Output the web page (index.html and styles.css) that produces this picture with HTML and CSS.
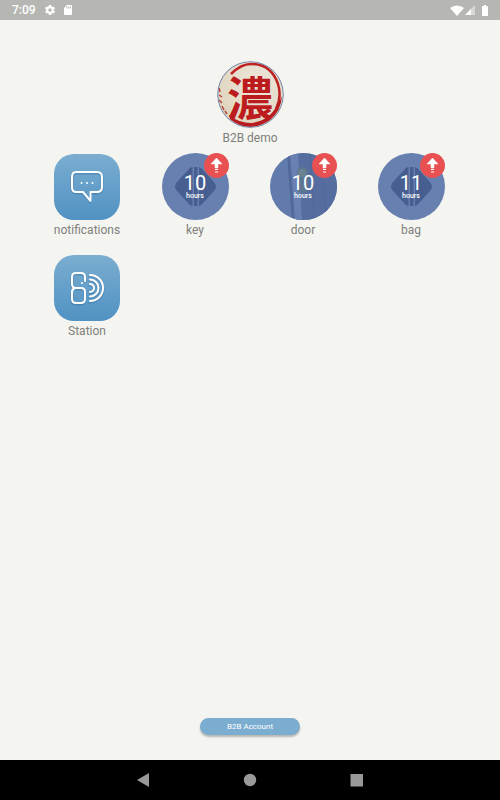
FILE: index.html
```html
<!DOCTYPE html>
<html lang="en">
<head>
    <meta charset="UTF-8">
    <meta name="viewport" content="width=device-width, initial-scale=1.0">
    <title>B2B demo</title>
    <link rel="stylesheet" href="styles.css">
</head>
<body>
    <!-- shared shapes -->
    <svg class="defs" aria-hidden="true">
        <symbol id="arrow" viewBox="0 0 25 25">
            <path d="M12.500 5L18 11H14V15H11V11H7Z" fill="#fff" stroke="#fff" stroke-width="0.500" stroke-linejoin="round"/>
            <path d="M11 16.500h3M11 19h3" stroke="#fff" stroke-width="1.200"/>
        </symbol>
        <symbol id="diamond" viewBox="0 0 67 67">
            <path d="M30.500 14V53Q28 53 26 50L15 38Q11 33.500 15 29L26 17Q28 14 30.500 14Z" fill="#475f90"/>
            <path d="M37 14V53Q39 53 41 50L52 38Q56 33.500 52 29L41 17Q39 14 37 14Z" fill="#475f90"/>
            <path d="M32 14h3.500v39h-3.500z" fill="#475f90"/>
        </symbol>
    </svg>

    <header class="status-bar">
        <span class="clock">7:09</span>
        <svg class="status-icon" viewBox="0 0 24 24">
            <path fill="#fff" d="M19.400 13c.1-.3.1-.7.1-1s0-.7-.1-1l2.100-1.600c.2-.2.3-.4.1-.7l-2-3.400c-.1-.3-.4-.3-.6-.3l-2.500 1c-.5-.4-1.100-.7-1.700-1l-.4-2.600c0-.3-.2-.4-.5-.4h-4c-.2 0-.4.1-.5.4l-.4 2.600c-.6.3-1.100.6-1.700 1l-2.500-1c-.2 0-.5 0-.6.3l-2 3.400c-.1.200-.1.500.1.700L4.600 11c-.1.300-.1.700-.1 1s0 .7.1 1l-2.100 1.600c-.2.200-.2.400-.1.700l2 3.400c.1.300.4.300.6.3l2.500-1c.5.4 1.100.7 1.700 1l.4 2.600c.1.300.2.400.5.4h4c.2 0 .5-.1.5-.4l.4-2.600c.6-.3 1.200-.6 1.700-1l2.500 1c.2 0 .5 0 .6-.3l2-3.400c.1-.2.1-.5-.1-.7zM12 15.500a3.500 3.500 0 1 1 0-7 3.500 3.500 0 0 1 0 7z"/>
        </svg>
        <svg class="status-icon" viewBox="0 0 24 24">
            <path fill="#fff" fill-rule="evenodd" d="M18 2h-8L4 8v12c0 1 1 2 2 2h12c1 0 2-1 2-2V4c0-1-1-2-2-2zM9 5h2v4H9zM12.500 5h2v4h-2zM16 5h2v4h-2z"/>
        </svg>
        <div class="status-right">
            <svg width="14" height="11" viewBox="0 0 14 11"><path fill="#fff" d="M0 3Q7-2 14 3L7 11Z"/></svg>
            <svg width="10" height="10" viewBox="0 0 10 10"><path fill="#d8d8d4" d="M10 0V10H0Z"/><path fill="#fff" d="M6 4V10H0Z"/></svg>
            <svg class="battery" width="6" height="11" viewBox="0 0 6 11"><path fill="#fff" d="M2 0h2v1h1.500l.5.500v9l-.5.500h-5l-.5-.5v-9L.5 1H2z"/></svg>
        </div>
    </header>

    <main class="home">
        <section class="profile">
            <div class="seal">
                <svg class="seal-art" viewBox="0 0 67 67" aria-hidden="true">
                    <path d="M14 13Q24 3 34 3Q54 3 61 23Q65 36 59 48" fill="none" stroke="#bf2122" stroke-width="2.500"/>
                    <path d="M65 35Q64 50 53 59Q43 66 32 66Q21 65 13 58L12 54Q22 62 34 62Q44 61 52 55Q60 47 65 35Z" fill="#b71d1f"/>
                    <path d="M2 27l1 4M2 34l3 2M2 39l3 3M5 45l2 4M8 50l2 3" stroke="#b5433e" stroke-width="1.500"/>
                    <circle cx="33.500" cy="33.500" r="32.800" fill="none" stroke="#6f86b8"/>
                </svg>
                <span class="seal-char" lang="ja">濃</span>
            </div>
            <p class="label">B2B demo</p>
        </section>

        <nav class="grid">
            <a class="item" href="#notifications">
                <svg class="app" viewBox="0 0 66 66" fill="none" stroke-linecap="round" stroke-linejoin="round">
                    <path class="line-shadow" d="M22 19H43Q48 19 48 24V34Q48 39 43 39H36.500V48L29 39H22Q18 39 18 34V24Q18 19 22 19Z"/>
                    <path class="line" d="M22 18H43Q48 18 48 23V33Q48 38 43 38H36.500V47L29 38H22Q18 38 18 33V23Q18 18 22 18Z"/>
                    <path class="line" d="M27.500 29h.01M33 29h.01M38.500 29h.01"/>
                </svg>
                <span class="label">notifications</span>
            </a>
            <a class="item" href="#key">
                <span class="tag">
                    <svg class="tag-art"><use href="#diamond"/></svg>
                    <span class="count">10</span>
                    <span class="unit">hours</span>
                    <svg class="badge"><use href="#arrow"/></svg>
                </span>
                <span class="label">key</span>
            </a>
            <a class="item" href="#door">
                <span class="tag tag-photo">
                    <svg class="tag-art" viewBox="0 0 67 67">
                        <path d="M18 0L24 67H67V0Z" fill="#566da0"/>
                        <path d="M20 0L25 67H32L28 0Z" fill="#6880b2"/>
                        <path d="M18 0L23 67" stroke="#4f6799" stroke-width="2"/>
                        <path d="M40 0L44 67M53 25L56 67" stroke="#50689b" stroke-width="1"/>
                        <rect x="27" y="14" width="11" height="26" rx="5" fill="#5d7792"/>
                        <circle cx="32" cy="20" r="4" fill="#6a8492"/>
                    </svg>
                    <span class="count">10</span>
                    <span class="unit">hours</span>
                    <svg class="badge"><use href="#arrow"/></svg>
                </span>
                <span class="label">door</span>
            </a>
            <a class="item" href="#bag">
                <span class="tag">
                    <svg class="tag-art"><use href="#diamond"/></svg>
                    <span class="count">11</span>
                    <span class="unit">hours</span>
                    <svg class="badge"><use href="#arrow"/></svg>
                </span>
                <span class="label">bag</span>
            </a>
            <a class="item" href="#station">
                <svg class="app" viewBox="0 0 66 66" fill="none" stroke-linecap="round" stroke-linejoin="round">
                    <path class="line-shadow" d="M31 26V23Q31 19 27 19H22Q18 19 18 23V30Q18 34 22 34H27Q31 34 31 38V45Q31 49 27 49H22Q18 49 18 45V39"/>
                    <path class="line-shadow" d="M36 30A4 4 0 0 1 36 38M36 25.500A8.500 8.500 0 0 1 36 42.500M36 21A13 13 0 0 1 36 47"/>
                    <path class="line" d="M31 26V22Q31 18 27 18H22Q18 18 18 22V29Q18 33 22 33H27Q31 33 31 37V44Q31 48 27 48H22Q18 48 18 44V37Q18 34 21 33"/>
                    <path class="line" d="M36 29A4 4 0 0 1 36 37M36 24.500A8.500 8.500 0 0 1 36 41.500M36 20A13 13 0 0 1 36 46"/>
                    <circle cx="28" cy="28" r="1" fill="#fff"/>
                </svg>
                <span class="label">Station</span>
            </a>
        </nav>

        <button class="account" type="button">B2B Account</button>
    </main>

    <footer class="nav-bar">
        <button type="button" aria-label="Back"><svg width="14" height="14" viewBox="0 0 14 14"><path d="M13 0V14L1 7Z"/></svg></button>
        <button type="button" aria-label="Home"><svg width="14" height="14" viewBox="0 0 14 14"><circle cx="7" cy="7" r="6.200"/></svg></button>
        <button type="button" aria-label="Recent apps"><svg width="14" height="14" viewBox="0 0 14 14"><rect x="0.500" y="1" width="12.500" height="12.500" rx="0.500"/></svg></button>
    </footer>
</body>
</html>
```

FILE: styles.css
```css
:root {
    --background-color: #f4f5f0;
    --label-color: #7f7f7c;
    --app-blue: #7badd1;
    --tag-blue: #6780b0;
    --badge-red: #e85052;
}

* {
    box-sizing: border-box;
}

body {
    margin: 0;
    min-height: 100vh;
    display: flex;
    flex-direction: column;
    font-family: Roboto, sans-serif;
    background-color: var(--background-color);
    color: var(--label-color);
}

svg {
    display: block;
}

.defs {
    position: absolute;
    width: 0;
    height: 0;
}

.status-bar {
    display: flex;
    align-items: center;
    height: 20px;
    padding: 0 12px;
    background-color: #b6b7b2;
    color: #fff;
}

.clock {
    font-size: 12px;
    font-weight: 500;
    margin-right: 8px;
}

.status-icon {
    width: 12px;
    height: 12px;
    margin-right: 6px;
}

.status-right {
    display: flex;
    align-items: center;
    gap: 1px;
    margin-left: auto;
}

.battery {
    margin-left: 6px;
}

.home {
    flex: 1;
    display: flex;
    flex-direction: column;
    padding-top: 41px;
}

.profile {
    display: flex;
    flex-direction: column;
    align-items: center;
}

.seal {
    position: relative;
    display: flex;
    align-items: center;
    justify-content: center;
    width: 67px;
    height: 67px;
    border-radius: 50%;
    background: radial-gradient(circle at 60% 35%, #eee8dc, #d9cdb2);
}

.seal-art {
    position: absolute;
    inset: 0;
    border-radius: 50%;
}

.seal-char {
    position: relative;
    font-family: "Noto Sans CJK JP", sans-serif;
    font-size: 46px;
    font-weight: 700;
    line-height: 64px;
    color: #bd1c1e;
}

.label {
    margin: 0;
    font-size: 12px;
    line-height: 20px;
    color: var(--label-color);
}

.grid {
    display: grid;
    grid-template-columns: repeat(4, 1fr);
    row-gap: 14px;
    padding: 5px 35px 0 33px;
}

.item {
    display: flex;
    flex-direction: column;
    align-items: center;
    text-decoration: none;
}

.app {
    width: 66px;
    height: 66px;
    margin-top: 1px;
    border-radius: 20px;
    background: linear-gradient(#7badd0, #5092c3);
}

.line {
    stroke: #fff;
    stroke-width: 2px;
}

.line-shadow {
    stroke: rgba(50, 105, 155, 0.4);
    stroke-width: 3px;
}

.tag {
    position: relative;
    display: flex;
    flex-direction: column;
    align-items: center;
    width: 67px;
    height: 67px;
    padding-top: 20px;
    color: #fff;
}

.tag-art {
    position: absolute;
    top: 0;
    left: 0;
    width: 67px;
    height: 67px;
    border-radius: 50%;
    background-color: var(--tag-blue);
}

.tag-photo .tag-art {
    background-color: #627bad;
}

.count {
    position: relative;
    font-size: 20px;
    line-height: 20px;
}

.unit {
    position: relative;
    font-size: 7px;
    font-weight: 500;
    line-height: 6px;
}

.badge {
    position: absolute;
    top: 0;
    right: 0;
    width: 25px;
    height: 25px;
    border-radius: 50%;
    background-color: var(--badge-red);
}

.account {
    align-self: center;
    width: 100px;
    height: 17px;
    margin: auto 0 25px;
    padding: 0;
    border: none;
    border-radius: 9px;
    background-color: var(--app-blue);
    box-shadow: 0 2px 2px rgba(0, 0, 0, 0.25);
    font-family: inherit;
    font-size: 8px;
    color: #fff;
}

.nav-bar {
    display: flex;
    align-items: center;
    justify-content: center;
    height: 40px;
    background-color: #000;
}

.nav-bar button {
    display: flex;
    justify-content: center;
    width: 107px;
    padding: 0;
    border: none;
    background: none;
    fill: #999;
}
```
